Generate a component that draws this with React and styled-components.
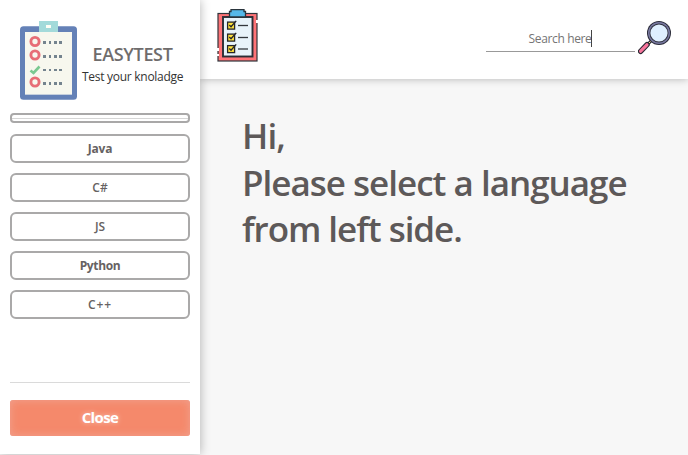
import React from "react";
import styled, { createGlobalStyle } from "styled-components";

const GlobalStyle = createGlobalStyle`
  * { box-sizing: border-box; }
  body {
    margin: 0;
    overflow: hidden;
    background: #f7f7f7;
    font-family: "Open Sans", "Noto Sans", sans-serif;
  }
`;

const Page = styled.div`
  display: flex;
  width: 688px;
  height: 455px;
  background: #f7f7f7;
`;

const Sidebar = styled.aside`
  position: relative;
  z-index: 2;
  display: flex;
  flex-direction: column;
  flex: none;
  width: 200px;
  height: 454px;
  padding: 21px 10px 18px;
  background: #fff;
  box-shadow: 0 0 10px rgba(0, 0, 0, 0.3);
`;

const Brand = styled.div`
  display: flex;
  gap: 5px;
  height: 79px;
  padding-left: 10px;
`;

const BrandText = styled.div`
  display: flex;
  flex-direction: column;
  flex: none;
  width: 101px;
  padding-top: 21px;
  text-align: center;
  white-space: nowrap;
`;

const BrandName = styled.span`
  font-size: 18px;
  font-weight: 600;
  line-height: 24px;
  letter-spacing: -0.35px;
  color: #6f6c6c;
`;

const Tagline = styled.span`
  font-size: 12px;
  line-height: 22px;
  letter-spacing: -0.28px;
  color: #333;
`;

const EmptySlot = styled.div`
  display: flex;
  align-items: center;
  height: 10px;
  margin-top: 13px;
  border: 2px solid #a9a8a8;
  border-radius: 4px;
`;

const SlotLine = styled.div`
  flex: 1;
  height: 1px;
  background: #d6d6d6;
`;

const Languages = styled.nav`
  display: flex;
  flex-direction: column;
  gap: 10px;
  margin-top: 11px;
`;

const LanguageButton = styled.button`
  height: 29px;
  padding: 0 0 1px;
  border: 2px solid #aaa9a9;
  border-radius: 6px;
  background: #fff;
  color: #666262;
  font: ${(p) => p.$weight || 600} 12px "Open Sans", "Noto Sans", sans-serif;
  letter-spacing: ${(p) => p.$spacing};
`;

const Divider = styled.div`
  height: 1px;
  margin-top: auto;
  background: #dadada;
`;

const CloseButton = styled.button`
  height: 36px;
  margin-top: 17px;
  padding: 0 0 2px;
  border: 0;
  border-radius: 3px;
  background: #f5896b;
  box-shadow: inset 0 0 8px rgba(240, 165, 150, 0.9);
  color: #fff;
  font: 700 15px "Open Sans", "Noto Sans", sans-serif;
  letter-spacing: -0.6px;
  text-shadow: 0 0 5px rgba(255, 255, 255, 0.5);
`;

const Main = styled.main`
  display: flex;
  flex-direction: column;
  flex: 1;
`;

const Header = styled.header`
  display: flex;
  justify-content: space-between;
  height: 79px;
  padding: 9px 15px 0 17px;
  background: #fff;
  box-shadow: 0 0 8px rgba(0, 0, 0, 0.28);
`;

const Search = styled.div`
  display: flex;
  gap: 3px;
`;

const SearchField = styled.div`
  display: flex;
  justify-content: center;
  align-items: center;
  width: 149px;
  height: 43px;
  padding: 16px 0 0;
  border-bottom: 1px solid #999;
  color: #757575;
  font-size: 12px;
  letter-spacing: -0.36px;
`;

const Caret = styled.span`
  width: 1px;
  height: 17px;
  background: #444;
`;

const Greeting = styled.h1`
  margin: 34px 0 0 42px;
  color: #5d5959;
  font-size: 35px;
  font-weight: 600;
  line-height: 46.5px;
  white-space: nowrap;
`;

const Line = styled.div`
  letter-spacing: ${(p) => p.$spacing};
`;

const Icon = styled.svg`
  display: block;
  flex: none;
`;

function BrandIcon() {
  return (
    <Icon width="57" height="79" viewBox="20 21 57 79">
      <rect x="20" y="26.3" width="57" height="73.5" rx="3.5" fill="#6481b7" />
      <path d="M25 94V32H72V94Z" fill="#f7f7ee" />
      <path d="M25 94.5H72" stroke="#c5cfdc" />
      <rect x="39" y="21" width="19" height="11" fill="#a3dada" />
      <rect x="46" y="25" width="5" height="3" fill="#fffef5" />
      <g fill="none" stroke="#e76d76" strokeWidth="2.9">
        <circle cx="35" cy="41.5" r="4.1" />
        <circle cx="35" cy="55" r="4.1" />
        <circle cx="35" cy="82" r="4.1" />
      </g>
      <path d="M30.5 70.5L33.5 73L39.5 66.5" fill="none" stroke="#79c991" strokeWidth="2.6" />
      <g stroke="#74838e" strokeWidth="3">
        <path d="M43 42.5H46M49 42.5H51M54 42.5H57M59 42.5H62" />
        <path d="M43 56.5H46M49 56.5H51M54 56.5H57M59 56.5H62" />
        <path d="M43 70H46M49 70H51M54 70H57M59 70H62" strokeWidth="2" />
        <path d="M43 83.5H46M49 83.5H51M54 83.5H57M59 83.5H62" />
      </g>
    </Icon>
  );
}

function ChecklistIcon() {
  return (
    <Icon width="41" height="53" viewBox="217 9 41 53">
      <rect x="218" y="13.5" width="39" height="47.5" fill="#ff7377" stroke="#30343b" strokeWidth="1.2" />
      <path d="M218 48V51M218 54V56M257 20V23" stroke="#fff" strokeWidth="2" />
      <rect x="223" y="17" width="29.5" height="39.5" fill="#e8f3fa" stroke="#2b2d35" strokeWidth="1.9" />
      <path d="M229.5 17V11.5H231V9.7H244V11.5H245.5V17Z" fill="#55b8e9" stroke="#29343c" strokeWidth="1.3" />
      {[25, 37, 48.5].map((y) => (
        <g key={y} transform={`translate(227 ${y - 3.5})`}>
          <rect x=".6" y=".6" width="7" height="7" fill="#ffe23d" stroke="#25252a" strokeWidth="1.3" />
          <path d="M2.3 3.6L4 5.2L9.2 -.6" fill="none" stroke="#25252a" strokeWidth="1.4" />
          <path d="M11 4H21" stroke="#34383e" strokeWidth="1.3" />
        </g>
      ))}
    </Icon>
  );
}

function MagnifierIcon() {
  return (
    <Icon width="35" height="46" viewBox="638 9 35 46">
      <path d="M646.5 45.5L652 40" stroke="#30303a" strokeWidth="3" />
      <path d="M648 44L651 41" stroke="#f7dc85" strokeWidth="1" />
      <path d="M640.6 51.3L647 44.7" stroke="#282832" strokeWidth="5.4" strokeLinecap="round" />
      <path d="M640.7 51.2L646.9 44.8" stroke="#f7749a" strokeWidth="3.3" strokeLinecap="round" />
      <circle cx="659" cy="33" r="12" fill="#292a38" />
      <circle cx="659" cy="33" r="11" fill="#7879a1" />
      <circle cx="659" cy="33" r="9.5" fill="#30313e" />
      <circle cx="659" cy="33" r="8.6" fill="#dfefff" />
    </Icon>
  );
}

const languages = [
  { name: "Java", spacing: "-0.2px", weight: 700 },
  { name: "C#", spacing: "0px" },
  { name: "JS", spacing: "0px" },
  { name: "Python", spacing: "-0.35px", weight: 700 },
  { name: "C++", spacing: "0.9px" },
];

export default function App() {
  return (
    <>
      <GlobalStyle />
      <Page>
        <Sidebar>
          <Brand>
            <BrandIcon />
            <BrandText>
              <BrandName>EASYTEST</BrandName>
              <Tagline>Test your knoladge</Tagline>
            </BrandText>
          </Brand>
          <EmptySlot>
            <SlotLine />
          </EmptySlot>
          <Languages>
            {languages.map(({ name, spacing, weight }) => (
              <LanguageButton key={name} $spacing={spacing} $weight={weight}>
                {name}
              </LanguageButton>
            ))}
          </Languages>
          <Divider />
          <CloseButton>Close</CloseButton>
        </Sidebar>
        <Main>
          <Header>
            <ChecklistIcon />
            <Search>
              <SearchField>
                <span>Search here</span>
                <Caret />
              </SearchField>
              <MagnifierIcon />
            </Search>
          </Header>
          <Greeting>
            <Line $spacing="-0.9px">Hi,</Line>
            <Line $spacing="-1px">Please select a language</Line>
            <Line $spacing="-1.05px">from left side.</Line>
          </Greeting>
        </Main>
      </Page>
    </>
  );
}
